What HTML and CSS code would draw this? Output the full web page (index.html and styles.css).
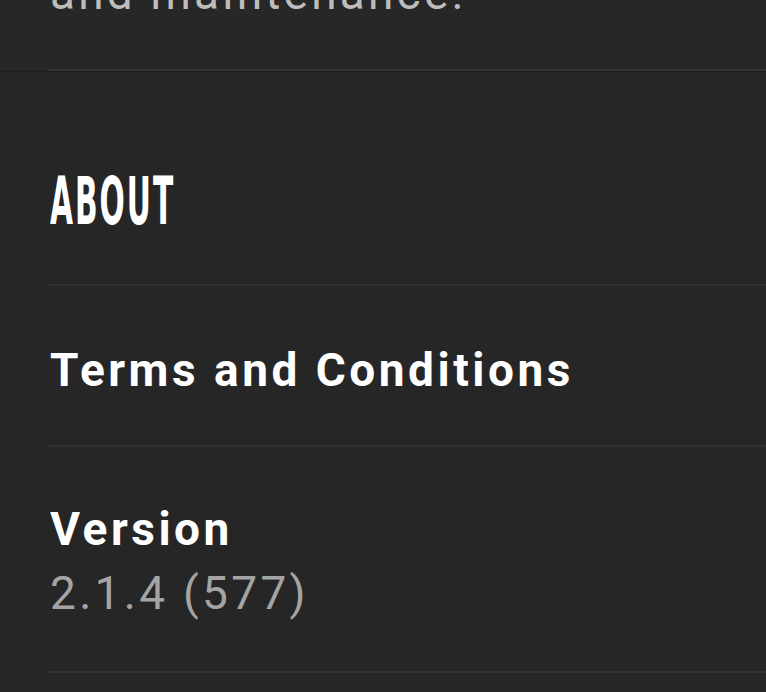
FILE: index.html
```html
<!DOCTYPE html>
<html>
<head>
<meta charset="utf-8">
<link rel="stylesheet" href="styles.css">
</head>
<body>
<div class="screen">
  <section class="intro">
    <div class="intro-inner">
      <p class="intro-text">and maintenance.</p>
    </div>
  </section>
  <div class="list">
    <div class="row header-row">
      <h2 class="section-title"><span class="title-inner">ABOUT</span></h2>
    </div>
    <div class="row link-row">
      <span class="row-title">Terms and Conditions</span>
    </div>
    <div class="row version-row">
      <span class="row-title">Version</span>
      <span class="row-sub">2.1.4 (577)</span>
    </div>
  </div>
</div>
</body>
</html>
```

FILE: styles.css
```css
html, body {
  margin: 0;
  padding: 0;
  background: #262626;
}
body {
  width: 766px;
  height: 692px;
  overflow: hidden;
  font-family: Roboto, "Noto Sans", sans-serif;
}
.screen {
  display: flex;
  flex-direction: column;
}
.intro {
  background: #272727;
  height: 71px;
  border-bottom: 1px solid #202020;
  overflow: hidden;
}
.intro-inner {
  margin-left: 48px;
  height: 69px;
  border-bottom: 2px solid #343434;
  display: flex;
  flex-direction: column;
}
.intro-text {
  margin: -34px 0 0 0;
  padding-left: 2px;
  font-size: 46px;
  line-height: 54px;
  letter-spacing: 3.2px;
  color: #bdbdbd;
}
.list {
  display: flex;
  flex-direction: column;
}
.row {
  margin-left: 48px;
  padding-left: 2px;
  border-bottom: 2px solid #313131;
  display: flex;
  flex-direction: column;
  justify-content: center;
  box-sizing: border-box;
}
.header-row {
  height: 214px;
  padding-top: 48px;
}
.link-row {
  height: 161px;
  padding-top: 8px;
}
.version-row {
  height: 226px;
  padding-top: 4px;
}
.section-title {
  margin: 0;
  font-family: "DejaVu Sans Condensed", "DejaVu Sans", sans-serif;
  font-weight: bold;
  font-size: 66px;
  line-height: 66px;
  letter-spacing: 4px;
  color: #ffffff;
}
.title-inner {
  display: inline-block;
  transform: scaleX(0.5);
  transform-origin: left center;
}
.row-title {
  font-size: 46px;
  font-weight: 700;
  letter-spacing: 3.5px;
  color: #ffffff;
  line-height: 56px;
}
.row-sub {
  margin-top: 8px;
  font-size: 46px;
  font-weight: 400;
  letter-spacing: 3.3px;
  color: #a4a4a4;
  line-height: 56px;
}
```
